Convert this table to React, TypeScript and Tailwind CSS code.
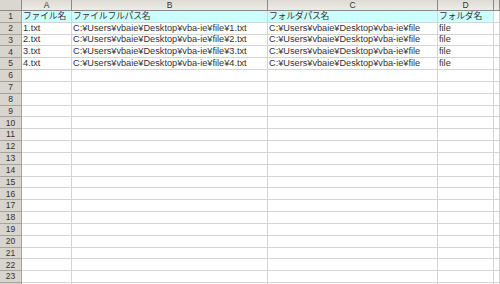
import React from "react";

const data: string[][] = [
  ["ファイル名", "ファイルフルパス名", "フォルダパス名", "フォルダ名"],
  ["1.txt", "C:¥Users¥vbaie¥Desktop¥vba-ie¥file¥1.txt", "C:¥Users¥vbaie¥Desktop¥vba-ie¥file", "file"],
  ["2.txt", "C:¥Users¥vbaie¥Desktop¥vba-ie¥file¥2.txt", "C:¥Users¥vbaie¥Desktop¥vba-ie¥file", "file"],
  ["3.txt", "C:¥Users¥vbaie¥Desktop¥vba-ie¥file¥3.txt", "C:¥Users¥vbaie¥Desktop¥vba-ie¥file", "file"],
  ["4.txt", "C:¥Users¥vbaie¥Desktop¥vba-ie¥file¥4.txt", "C:¥Users¥vbaie¥Desktop¥vba-ie¥file", "file"],
];

const cols = ["A", "B", "C", "D", ""];

export default function App() {
  const rows = Array.from({ length: 24 }, (_, i) => i + 1);
  return (
    <div
      className="w-[500px] h-[284px] overflow-hidden bg-white text-[9px] text-black"
      style={{ fontFamily: '"Liberation Sans", "Noto Sans CJK JP", sans-serif' }}
    >
      <div className="grid grid-cols-[22px_50px_196px_170px_56px_6px]">
        <div className="h-[11px] bg-[#dad7d0] border-r border-b border-[#8c8a84]" />
        {cols.map((c, i) => (
          <div
            key={i}
            className="h-[11px] bg-gradient-to-b from-[#dedbd4] to-[#eeece8] border-r border-b border-[#8c8a84] flex items-center justify-center leading-none text-[8.5px] text-[#333]"
          >
            {c}
          </div>
        ))}
        {rows.map((r) => {
          const rd = data[r - 1];
          const cyan = r === 1;
          return (
            <React.Fragment key={r}>
              <div className="h-[11.83px] bg-[#d8d5ce] border-r border-b border-[#a6a39c] flex items-center justify-center leading-none text-[8.5px] text-[#333]">
                {r < 24 ? r : ""}
              </div>
              {[0, 1, 2, 3, 4].map((ci) => (
                <div
                  key={ci}
                  className={`h-[11.83px] border-r border-b border-[#d4d4d4] flex items-center pl-[1px] leading-none whitespace-nowrap overflow-hidden text-[#333] ${
                    cyan && ci < 4 ? "bg-[#ccffff]" : "bg-white"
                  } ${cyan ? "text-[8.8px] tracking-[-0.2px]" : "text-[9.2px]"}`}
                >
                  {rd && ci < 4 ? rd[ci] : ""}
                </div>
              ))}
            </React.Fragment>
          );
        })}
      </div>
    </div>
  );
}
